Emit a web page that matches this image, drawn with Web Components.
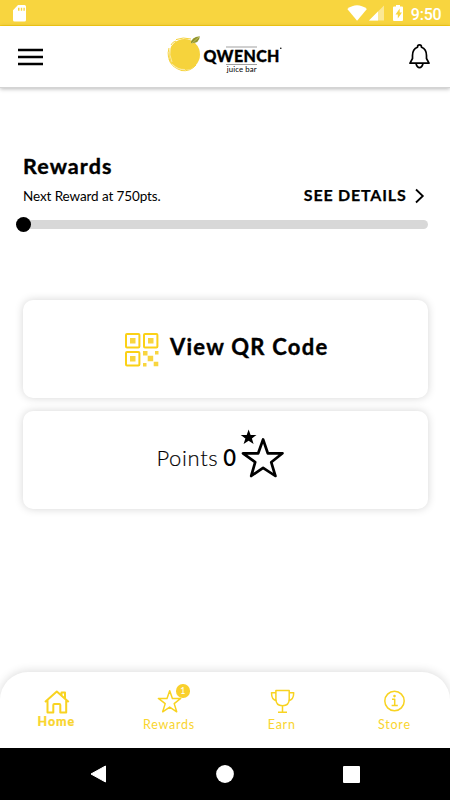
<!DOCTYPE html>
<html lang="en">
<head>
<meta charset="utf-8">
<title>Qwench Juice Bar</title>
<style>
html,body{margin:0;height:100%;background:#fff}
body{font-family:Lato,"Open Sans",sans-serif;color:#000;overflow:hidden}
</style>
</head>
<body>
<qwench-app></qwench-app>
<script>
const define = (name, html) => {
  const t = document.createElement('template');
  t.innerHTML = html;
  customElements.define(name, class extends HTMLElement {
    constructor() {
      super();
      this.attachShadow({mode: 'open'}).appendChild(t.content.cloneNode(true));
    }
  });
};

define('status-bar', `<style>
:host{display:flex;align-items:center;height:25px;background:#f8d53f;border-bottom:1px solid #fbcf14;box-sizing:content-box;padding:0 8.500px 0 13px}
svg{display:block;margin-top:1px}
.sp{flex:1}
.time{font:500 16px/25px Roboto,sans-serif;color:#fff;padding-top:3px;letter-spacing:-.2px}
</style>
<svg width="13" height="17" viewBox="0 0 13 17" fill="#fff"><path fill-rule="evenodd" d="M5 0h6.500q1.500 0 1.500 1.500v13.500q0 1.500-1.500 1.500h-10Q0 16.500 0 15V5.200zM5 2.700v3h1.500v-3zM7.800 2.700v3h1.400v-3zM10.400 2.700v3h1.400v-3z"/></svg>
<span class="sp"></span>
<svg width="64" height="18" viewBox="347 4 64 18" fill="#fff">
<path d="M347.300 8.900Q357 1.400 366.900 8.900L357.100 20.700z"/>
<path d="M384 5.500V20.500H369z" opacity=".45"/><path d="M378 11.500V20.500H369z"/>
<path fill-rule="evenodd" d="M396 5h4v1.500h2q1 0 1 1v12.500q0 1-1 1h-8q-1 0-1-1V7.500q0-1 1-1h2zM399.700 8.500l-4.200 6h2.300v4l4.200-6h-2.300z"/></svg>
<span class="time">9:50</span>`);

define('qwench-logo', `<style>:host{display:block;width:116px;height:40px}svg{display:block}text{font-family:Lato,sans-serif}</style>
<svg width="116" height="40" viewBox="167 34 116 40">
<g fill="none" stroke="#f6d33c"><circle cx="184.500" cy="53.500" r="15.500" fill="#f6d33c" stroke="none"/>
<path d="M169 47Q166 57 173 64M169 58Q171 66 181 69.300M176 38.600Q183 35.700 191 38M181 69.500Q190 71 196 64M171 44Q172 41 176 40"/></g>
<path d="M170.500 46Q168.500 54 172 61M172 63Q178 69 185 68.500" fill="none" stroke="#fff" stroke-width=".5"/>
<path d="M191 42.300Q191 36.300 199.800 35.300Q199.500 42.500 191 42.300z" fill="#91952d"/><path d="M191 43l8-7" stroke="#d2cd7d" stroke-width=".7"/>
<path d="M226 46h31M226 63.500h31" stroke="#888" stroke-width=".8"/>
<text x="203.500" y="60.700" font-size="16" font-weight="900" stroke="#000" stroke-width=".3" textLength="76" lengthAdjust="spacing">QWENCH</text>
<circle cx="280.800" cy="47.200" r=".8"/>
<text x="226.800" y="71" font-size="7.800" textLength="29.700" lengthAdjust="spacing">juice bar</text>
</svg>`);

define('app-header', `<style>
:host{display:grid;grid-template-columns:1fr 116px 1fr;align-items:center;height:61px;padding:0 19px 0 18px;background:#fff;border-bottom:1px solid #d4d4d4;box-shadow:0 1px 4px rgba(0,0,0,.28);box-sizing:content-box}
svg{display:block}.bell{justify-self:end;margin:-1px 1px 0 0}qwench-logo{margin:-4px 0 0 .5px}
</style>
<svg width="25" height="18" viewBox="0 0 25 18"><path d="M0 2h25M0 9h25M0 16h25" stroke="#000" stroke-width="2.700"/></svg>
<qwench-logo></qwench-logo>
<svg class="bell" width="22" height="26" viewBox="408 43 22 26" fill="none" stroke="#000" stroke-width="1.700" stroke-linejoin="round"><path d="M417.500 47.200C417.500 44.200 421.500 44.200 421.500 47.200C425.500 48.700 426.500 51.500 426.500 55.500V58.500L429 63.200H410L412.500 58.500V55.500C412.500 51.500 413.500 48.700 417.500 47.200zM416 63.500Q417 67.600 419.500 67.600T423 63.500"/></svg>`);

define('progress-track', `<style>
:host{display:block;position:relative;height:9px;border-radius:5px;background:#d8d8d8}
i{position:absolute;left:-7px;top:-3px;width:15px;height:15px;border-radius:50%;background:#000}
</style><i></i>`);

define('rewards-summary', `<style>
:host{display:block}
h2{margin:0;font-size:21.500px;line-height:26px;font-weight:700;letter-spacing:1.100px;-webkit-text-stroke:.4px #000}
.row{display:flex;justify-content:space-between;align-items:center;height:20px;margin:7px 0 14px}
.next{font-size:13.500px;letter-spacing:-.1px;margin-top:-1px}
.more{display:flex;align-items:center;font-size:16px;font-weight:700;letter-spacing:.8px;-webkit-text-stroke:.25px #000}
.more span{margin-top:-3px}
svg{margin:0 2.500px 0 7.500px}
</style>
<h2>Rewards</h2>
<div class="row"><span class="next">Next Reward at 750pts.</span>
<span class="more"><span>SEE DETAILS</span><svg width="11" height="16" viewBox="0 0 11 16"><path d="M2 1.500l6.800 6.500L2 14.500" fill="none" stroke="#000" stroke-width="1.800"/></svg></span></div>
<progress-track></progress-track>`);

define('action-card', `<style>
:host{display:flex;align-items:center;justify-content:center;height:98px;border-radius:10px;background:#fff;box-shadow:0 0 8px rgba(0,0,0,.17)}
</style><slot></slot>`);

define('qr-label', `<style>
:host{display:flex;align-items:center;margin-left:3px}svg{display:block;margin:1px 11px 0 0}
span{font-size:22px;font-weight:700;letter-spacing:1.250px;line-height:26px;margin-top:-4px;white-space:nowrap;-webkit-text-stroke:.4px #000}
</style>
<svg width="34" height="34" viewBox="0 0 34 34" fill="#f8d53f"><g fill="none" stroke="#fbd116" stroke-width="2"><rect x="1" y="1" width="13.400" height="13.400" rx="1"/><rect x="19" y="1" width="13.400" height="13.400" rx="1"/><rect x="1" y="19" width="13.400" height="13.400" rx="1"/></g><path d="M5 5h5.500v5.500H5zM23 5h5.500v5.500H23zM5 23h5.500v5.500H5zM18 18h4.500v4.500H18zM22.700 22.700h5.500v5.500h-5.500zM30 18h3.500v3.500H30zM18 30h3.500v3.500H18zM28.700 28.700h4.600v4.600h-4.600z"/></svg>
<span>View QR Code</span>`);

define('points-label', `<style>
:host{display:flex;align-items:center;font-size:22px;line-height:26px;margin-left:-9px}
span{margin-top:-4px}
.p{font-weight:300;letter-spacing:.65px;-webkit-text-stroke:.15px #000}.n{font-weight:600;margin-left:5px}
svg{display:block;margin:-12px 0 0 4px}
</style>
<span class="p">Points</span><span class="n">0</span>
<svg width="45" height="50" viewBox="240 428 45 50"><path d="M263.100 438.500L267.800 452.300H282.500L271.200 461.200L275.400 475L263.100 466.800L251.200 475L255.200 461.200L243 452.300H258.200z" fill="none" stroke="#000" stroke-width="2.700" stroke-linejoin="round"/><path d="M248.600 428.500L250.600 433.900H256.500L251.900 437.500L253.600 443.100L248.600 439.800L243.600 443.100L245.400 437.500L240.700 433.900H246.700z"/></svg>`);

define('tab-item', `<style>
:host{display:flex;flex-direction:column;align-items:center;position:relative;color:#f9d52f;font-size:12.500px;line-height:16px;letter-spacing:.75px}
:host([active]){font-weight:900;letter-spacing:.9px}
::slotted(svg){display:block;height:28px;width:30px;fill:none;stroke:#f8d321;stroke-width:1.500;stroke-linejoin:round}
.label{margin-top:2.500px}:host([active]) .label{margin-top:0;-webkit-text-stroke:.2px}
::slotted(b){position:absolute;left:calc(50% + 7px);top:-2px;width:13.500px;height:13.500px;border-radius:50%;background:#f9d02c;color:#fff;font-size:9px;font-weight:400;line-height:13px;letter-spacing:0;text-align:center}
</style><slot name="icon"></slot><slot name="badge"></slot><span class="label"><slot></slot></span>`);

define('tab-bar', `<style>
:host{display:grid;grid-template-columns:repeat(4,112.700px);height:76px;padding-top:14px;box-sizing:border-box;border-radius:28px 28px 0 0;background:#fff;box-shadow:0 -1px 10px rgba(0,0,0,.14)}
</style>
<tab-item active><svg slot="icon" viewBox="0 0 30 28" style="stroke-width:2"><path d="M6 15V27.500H11.800V20Q11.800 19 12.800 19H17.800Q18.800 19 18.800 20V27.500H24.700V15M3.500 17L15.300 6.500L27.200 17M20 10V7.500H23.500V13" transform="translate(.5 -1)"/></svg>Home</tab-item>
<tab-item><svg slot="icon" viewBox="0 0 30 28"><path d="M15.500 5.500L18.200 13.100H26.500L20 18.300L22.500 26.500L15.500 21.800L8.500 26.500L11 18.300L4.200 13.100H12.800z" transform="translate(.2 -.7)"/></svg><b slot="badge">1</b>Rewards</tab-item>
<tab-item><svg slot="icon" viewBox="0 0 30 28"><path d="M9.200 5H22.500V14Q22.500 20 15.800 20.300Q9.200 20 9.200 14zM9.200 7.200H4.800Q4.800 15 10.200 15M22.500 7.200H27Q27 15 21.500 15M15.800 20.500V26.800M11.300 26.800H20.300" transform="translate(-.3 -.5)"/></svg>Earn</tab-item>
<tab-item><svg slot="icon" viewBox="0 0 30 28"><g transform="translate(-.2 -.7)"><circle cx="15.700" cy="15.700" r="9.700"/><path d="M13.200 14H15.900V20M12.800 20.200H19"/><circle cx="15.700" cy="10.800" r="1.300" fill="#f8d321" stroke="none"/></g></svg>Store</tab-item>`);

define('system-nav', `<style>
:host{display:grid;grid-template-columns:repeat(3,126.500px);justify-content:center;align-items:center;justify-items:center;height:52px;background:#000}svg{display:block}
</style>
<svg width="18" height="20" viewBox="0 0 18 20"><path d="M1 10L15.500 2V18z" fill="#fff" stroke="#fff" stroke-linejoin="round"/></svg>
<svg width="18" height="18"><circle cx="9" cy="9" r="8.900" fill="#fff"/></svg>
<svg width="17" height="17"><rect width="17" height="17" rx="1" fill="#fff"/></svg>`);

define('qwench-app', `<style>
:host{display:flex;flex-direction:column;height:800px;width:450px}
main{flex:1;display:flex;flex-direction:column;padding:65px 22.500px 0 23px;min-height:0}
action-card+action-card{margin-top:12.500px}.cards{padding-top:71px}
</style>
<status-bar></status-bar><app-header></app-header>
<main><rewards-summary></rewards-summary>
<div class="cards"><action-card><qr-label></qr-label></action-card><action-card><points-label></points-label></action-card></div></main>
<tab-bar></tab-bar><system-nav></system-nav>`);
</script>
</body>
</html>
